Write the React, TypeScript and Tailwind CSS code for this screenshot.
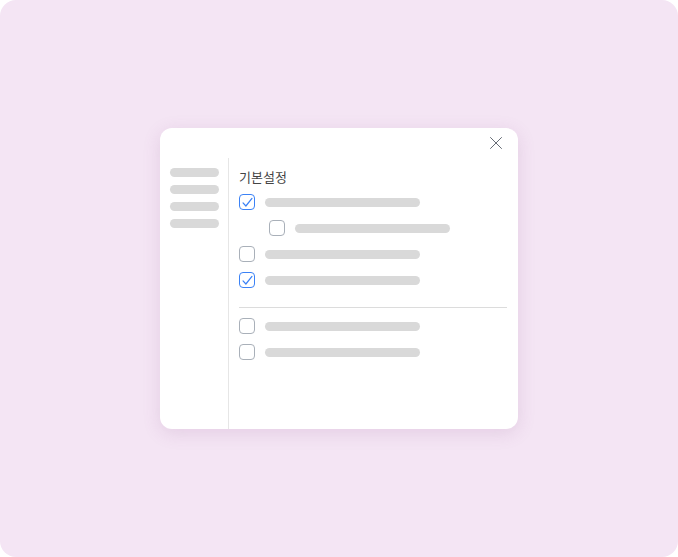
type Row = { checked: boolean; indent?: boolean }

const topRows: Row[] = [
  { checked: true },
  { checked: false, indent: true },
  { checked: false },
  { checked: true },
]

const bottomRows: Row[] = [{ checked: false }, { checked: false }]

function Checkbox({ checked }: { checked: boolean }) {
  return (
    <div
      className={
        checked
          ? "w-4 h-4 rounded-[4px] border-[1.5px] border-[#3b82f6] flex items-center justify-center shrink-0"
          : "w-4 h-4 rounded-[4px] border-[1.5px] border-[#a9b0b9] shrink-0"
      }
    >
      {checked && (
        <svg viewBox="0 0 16 16" className="w-[13px] h-[13px]" fill="none" stroke="#3b82f6" strokeWidth={1.5} strokeLinecap="round" strokeLinejoin="round">
          <path d="M2.5 8.5l3.5 3.8L13.5 3" />
        </svg>
      )}
    </div>
  )
}

function OptionRow({ row }: { row: Row }) {
  return (
    <div className={`h-[26px] flex items-center gap-[10px] ${row.indent ? "pl-[30px]" : ""}`}>
      <Checkbox checked={row.checked} />
      <div className="w-[155px] h-[9px] rounded-full bg-[#d9d9d9]" />
    </div>
  )
}

export default function App() {
  return (
    <div className="w-[678px] h-[557px] bg-white">
      <div className="w-full h-full rounded-[16px] bg-[#f4e5f4] flex items-center justify-center">
        {/* Settings dialog */}
        <div className="w-[358px] h-[301px] bg-white rounded-[12px] shadow-[0_4px_18px_rgba(140,80,140,0.16)] flex flex-col">
          <div className="h-[30px] flex items-center justify-end pr-[16px]">
            <svg viewBox="0 0 12 12" className="w-[12px] h-[12px]" fill="none" stroke="#666c75" strokeWidth={1} strokeLinecap="round">
              <path d="M0.5 0.5l11 11M11.5 0.5l-11 11" />
            </svg>
          </div>

          <div className="flex flex-1">
            {/* Sidebar */}
            <div className="w-[69px] border-r border-[#e6e6e6] pl-[10px] pt-[10px] flex flex-col gap-[8px]">
              <div className="w-[49px] h-[9px] rounded-full bg-[#d9d9d9]" />
              <div className="w-[49px] h-[9px] rounded-full bg-[#d9d9d9]" />
              <div className="w-[49px] h-[9px] rounded-full bg-[#d9d9d9]" />
              <div className="w-[49px] h-[9px] rounded-full bg-[#d9d9d9]" />
            </div>

            {/* Content */}
            <div className="flex-1 pl-[10px] pr-[11px] pt-[10px]">
              <div className="text-[13px] leading-[18px] text-[#444444] font-['Noto_Sans_CJK_KR',sans-serif]">
                기본설정
              </div>
              <div className="mt-[3px]">
                {topRows.map((row, i) => (
                  <OptionRow key={i} row={row} />
                ))}
              </div>
              <div className="mt-[14px] h-px bg-[#dcdcdc]" />
              <div className="mt-[5px]">
                {bottomRows.map((row, i) => (
                  <OptionRow key={i} row={row} />
                ))}
              </div>
            </div>
          </div>
        </div>
      </div>
    </div>
  )
}
